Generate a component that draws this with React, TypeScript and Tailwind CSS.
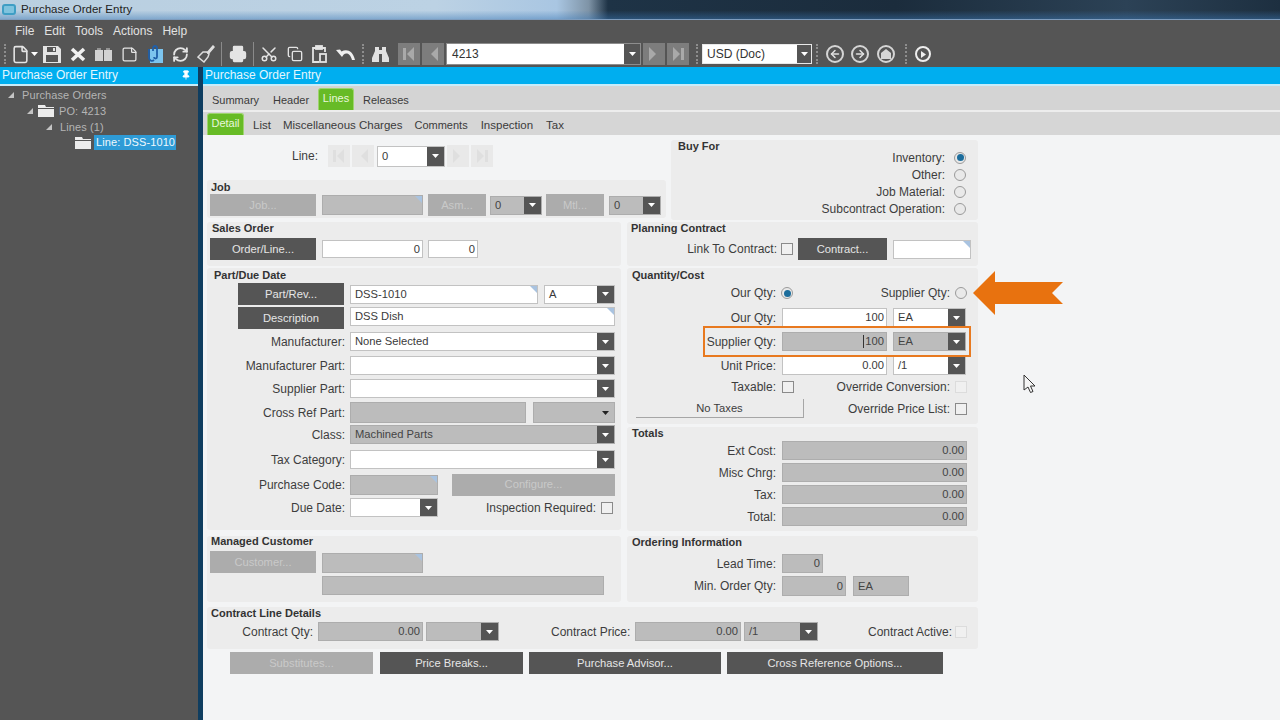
import type { ReactNode } from 'react';
import clsx from 'clsx';
import { Copy, File, Printer, RefreshCw, Scissors, StickyNote, ArrowLeft, ArrowRight, Pin } from 'lucide-react';

function Caret({ className = 'fill-white' }: { className?: string }) {
  return (
    <svg width="7" height="4" viewBox="0 0 7 4" className={className}>
      <path d="M0 0h7L3.5 4z" />
    </svg>
  );
}

function Box({ value, gray, right, notch, className }: { value?: ReactNode; gray?: boolean; right?: boolean; notch?: boolean; className?: string }) {
  return (
    <div
      className={clsx(
        'relative flex items-center shrink-0 px-[4px] text-[11.2px] border',
        gray ? 'bg-[#bcbcbc] border-[#adadad] text-[#444]' : 'bg-white border-[#c2c2c2] text-[#3a3a3a]',
        right && 'justify-end pr-[2px]',
        className,
      )}
    >
      {value}
      {notch && <span className="absolute top-0 right-0 w-0 h-0 border-t-[7px] border-l-[7px] border-t-[#a9c3e0] border-l-transparent" />}
    </div>
  );
}

function Combo({ value, gray, className, lightArrow }: { value?: string; gray?: boolean; className?: string; lightArrow?: boolean }) {
  return (
    <div
      className={clsx(
        'flex items-center shrink-0 text-[11.2px] border',
        gray ? 'bg-[#bcbcbc] border-[#adadad] text-[#444]' : 'bg-white border-[#c2c2c2] text-[#3a3a3a]',
        className,
      )}
    >
      <span className="flex-1 pl-[4px]">{value}</span>
      <span className={clsx('w-[17px] self-stretch flex items-center justify-center', lightArrow ? '' : 'bg-[#555]')}>
        <Caret className={lightArrow ? 'fill-[#222]' : 'fill-white'} />
      </span>
    </div>
  );
}

function Btn({ children, disabled, className }: { children: ReactNode; disabled?: boolean; className?: string }) {
  return (
    <div
      className={clsx(
        'flex items-center justify-center shrink-0 h-[22px] text-[11.2px]',
        disabled ? 'bg-[#acacac] text-[#c9c9c9]' : 'bg-[#555] text-[#e6e6e6]',
        className,
      )}
    >
      {children}
    </div>
  );
}

function Label({ children, className }: { children: ReactNode; className?: string }) {
  return <span className={clsx('shrink-0 text-right text-[12px] text-[#3d3d3d] whitespace-nowrap', className)}>{children}</span>;
}

function Radio({ on }: { on?: boolean }) {
  return (
    <span className="flex items-center justify-center shrink-0 w-[12px] h-[12px] rounded-full border border-[#9a9a9a] bg-[#e9e9e9]">
      {on && <span className="w-[7px] h-[7px] rounded-full bg-[#1c6d9c]" />}
    </span>
  );
}

function Check({ faint }: { faint?: boolean }) {
  return <span className={clsx('block shrink-0 w-[12px] h-[12px] border bg-[#f0f0f0]', faint ? 'border-[#dcdcdc]' : 'border-[#8a8a8a]')} />;
}

function Panel({ title, className, titleClass = 'leading-[13px]', children }: { title: string; className?: string; titleClass?: string; children: ReactNode }) {
  return (
    <section className={clsx('bg-[#ececec] rounded-[3px] shrink-0', className)}>
      <h3 className={clsx('h-[15px] pl-[4px] text-[11px] font-bold text-[#333]', titleClass)}>{title}</h3>
      {children}
    </section>
  );
}

function NavBtn({ dir, end, light }: { dir: 'l' | 'r'; end?: boolean; light?: boolean }) {
  return (
    <span className={clsx('flex items-center justify-center shrink-0 w-[22px] h-[22px]', light ? 'bg-[#e9e9e9]' : 'bg-[#7d7d7d]')}>
      <svg width="12" height="14" viewBox="0 0 12 14" className={light ? 'fill-[#dfdfdf]' : 'fill-[#a9a9a9]'}>
        {dir === 'l' ? (
          <>
            {end && <rect x="0" y="1" width="3" height="12" />}
            <path d="M11 0v14L4 7z" />
          </>
        ) : (
          <>
            <path d="M1 0v14l7-7z" />
            {end && <rect x="9" y="1" width="3" height="12" />}
          </>
        )}
      </svg>
    </span>
  );
}

function Grip({ className }: { className?: string }) {
  return <span className={clsx('block shrink-0 w-[2px] h-[20px] border-l-2 border-dotted border-[#8d8d8d]', className)} />;
}

function Folder({ className }: { className?: string }) {
  return (
    <svg width="16" height="12" viewBox="0 0 16 12" className={clsx('shrink-0 fill-[#ececec]', className)}>
      <path d="M0 0h7l1 2h8v1H0zM0 4h16v8H0z" />
    </svg>
  );
}

function Tri() {
  return (
    <svg width="6" height="6" viewBox="0 0 6 6" className="shrink-0 fill-[#c4c4c4]">
      <path d="M6 0v6H0z" />
    </svg>
  );
}

function Slot({ children, className }: { children: ReactNode; className?: string }) {
  return <span className={clsx('flex items-center justify-center shrink-0 h-[26px]', className)}>{children}</span>;
}

function Round({ children, className }: { children: ReactNode; className?: string }) {
  return <span className={clsx('flex items-center justify-center shrink-0 rounded-full border-2', className)}>{children}</span>;
}

const ICON = '#e4e4e4';

function Toolbar() {
  return (
    <div className="h-[26px] flex items-center bg-[#555] pl-[4px]">
      <Grip />
      <Slot className="w-[22px] ml-[3px]"><File size={19} color={ICON} strokeWidth={2} /></Slot>
      <Slot className="w-[7px]"><Caret /></Slot>
      <Slot className="w-[26px] ml-[1px]">
        <svg width="18" height="17" viewBox="0 0 18 17" fill={ICON}>
          <path fillRule="evenodd" d="M0 0h15l3 3v14H0zM4 1v5h9V1zM10 2h2v3h-2zM3 9v7h12V9z" />
        </svg>
      </Slot>
      <Slot className="w-[26px]">
        <svg width="16" height="15" viewBox="0 0 16 15" stroke="#f0f0f0" strokeWidth="3.6">
          <path d="M2 2l12 11M14 2L2 13" />
        </svg>
      </Slot>
      <Slot className="w-[25px]">
        <svg width="17" height="13" viewBox="0 0 17 13" fill="#d2d2d2">
          <path d="M0 2l8 0v11H0zM9 2h8v11H9z" />
          <path d="M2 1h4M11 1h4" stroke="#d2d2d2" />
        </svg>
      </Slot>
      <Slot className="w-[26px]"><StickyNote size={17} color={ICON} strokeWidth={1.8} /></Slot>
      <Slot className="w-[26px]">
        <svg width="16" height="18" viewBox="0 0 16 18">
          <rect x="3" y="4" width="13" height="14" fill="#7cc4ee" />
          <path d="M6 6V3a2 2 0 0 1 4 0v9a1.5 1.5 0 0 1-3 0" fill="none" stroke="#1f5fa8" strokeWidth="1.8" />
          <path d="M2 4v9a3 3 0 0 0 5 2" fill="none" stroke="#1f5fa8" strokeWidth="1.8" />
        </svg>
      </Slot>
      <Slot className="w-[25px]"><RefreshCw size={17} color={ICON} strokeWidth={2.6} /></Slot>
      <Slot className="w-[25px]">
        <svg width="18" height="18" viewBox="0 0 18 18" fill="none" stroke="#dedede" strokeWidth="1.5">
          <path d="M10 8l6-7 1 1-6 7" fill="#dedede" />
          <path d="M10 7l2 2-1 3-4 5-6-5 5-5z" />
        </svg>
      </Slot>
      <span className="block w-px h-[24px] bg-[#8a8a8a] ml-[3px]" />
      <Slot className="w-[31px]"><Printer size={18} color={ICON} fill={ICON} strokeWidth={1.8} /></Slot>
      <span className="block w-px h-[24px] bg-[#8a8a8a]" />
      <Slot className="w-[29px]"><Scissors size={18} color={ICON} strokeWidth={2} className="-rotate-90" /></Slot>
      <Slot className="w-[23px]"><Copy size={16} color={ICON} strokeWidth={2} /></Slot>
      <Slot className="w-[26px]">
        <svg width="15" height="18" viewBox="0 0 15 18" fill="none" stroke={ICON} strokeWidth="1.8">
          <path d="M4 3H1v14h6M10 3h3v4" />
          <rect x="4" y="1" width="6" height="3" fill={ICON} />
          <rect x="8" y="9" width="6" height="8" />
        </svg>
      </Slot>
      <Slot className="w-[26px]">
        <svg width="19" height="13" viewBox="0 0 19 13" fill="#f0f0f0">
          <path d="M0 2l6 7 1.5-2.2C10 4.6 14 5 16 12l3 0C17 2.5 10.500 0.500 5.500 3.500L4 1.500z" />
        </svg>
      </Slot>
      <Grip className="ml-[4px]" />
      <Slot className="w-[28px] ml-[2px]">
        <svg width="17" height="15" viewBox="0 0 17 15" fill="#e2e2e2">
          <path d="M3 0h4v3h3V0h4v4l3 7v4h-7V7H7v8H0v-4l3-7z" />
        </svg>
      </Slot>
      <span className="ml-[4px] mr-[2px]"><NavBtn dir="l" end /></span>
      <NavBtn dir="l" />
      <div className="ml-[2px] w-[195px] h-[22px] flex items-center border border-[#8d8d8d] bg-white text-[12px] text-[#333] shrink-0">
        <span className="flex-1 pl-[5px]">4213</span>
        <span className="w-[16px] self-stretch bg-[#555] flex items-center justify-center"><Caret /></span>
      </div>
      <span className="ml-[2px] mr-[2px]"><NavBtn dir="r" /></span>
      <NavBtn dir="r" end />
      <Grip className="ml-[7px]" />
      <div className="ml-[4px] w-[110px] h-[20px] flex items-center border border-[#e8e8e8] bg-white text-[12px] text-[#333] shrink-0">
        <span className="flex-1 pl-[4px]">USD (Doc)</span>
        <span className="w-[14px] self-stretch bg-[#555] flex items-center justify-center"><Caret /></span>
      </div>
      <Grip className="ml-[4px]" />
      <Round className="w-[18px] h-[18px] ml-[8px] border-[#d5d5d5]"><ArrowLeft size={12} color="#e0e0e0" strokeWidth={3} /></Round>
      <Round className="w-[18px] h-[18px] ml-[7px] border-[#d5d5d5]"><ArrowRight size={12} color="#e0e0e0" strokeWidth={3} /></Round>
      <Round className="w-[18px] h-[18px] ml-[8px] border-[#d5d5d5]">
        <svg width="10" height="10" viewBox="0 0 10 10" fill="#d5d5d5"><path d="M5 0l5 4v6H0V4z" /></svg>
      </Round>
      <Grip className="ml-[10px]" />
      <Round className="w-[16px] h-[16px] ml-[8px] border-[#eee]">
        <svg width="5" height="7" viewBox="0 0 5 7" fill="#eee"><path d="M0 0l5 3.500L0 7z" /></svg>
      </Round>
    </div>
  );
}

function Sidebar() {
  return (
    <aside className="w-[198px] shrink-0 flex flex-col bg-[#555]">
      <div className="h-[17px] flex items-center justify-between pb-px pl-[2px] pr-[7px] bg-[#00aeef] text-[12px] text-[#e4f6fd]">
        Purchase Order Entry
        <Pin size={10} color="#fff" fill="#fff" />
      </div>
      <div className="h-[2px] bg-[#c7ecf9]" />
      <div className="pt-[1px] text-[11px] tracking-[0.1px] text-[#b4b4b4] whitespace-nowrap">
        <div className="h-[16px] flex items-center pl-[8px] gap-[8px]"><Tri />Purchase Orders</div>
        <div className="h-[16px] flex items-center pl-[27px]"><Tri /><Folder className="ml-[5px] mr-[5px]" />PO: 4213</div>
        <div className="h-[16px] flex items-center pl-[46px] gap-[8px]"><Tri />Lines (1)</div>
        <div className="h-[15px] flex items-center pl-[75px]">
          <Folder className="mr-[3px]" />
          <span className="h-[15px] w-[82px] leading-[15px] pl-[2px] bg-[#2e9bd6] text-[#eef8fd]">Line: DSS-1010</span>
        </div>
      </div>
    </aside>
  );
}

function Tabs() {
  return (
    <>
      <div className="h-[17px] flex items-center pb-px pl-[2px] bg-[#00aeef] text-[12px] text-[#e4f6fd]">Purchase Order Entry</div>
      <div className="h-[2px] bg-[#c7ecf9]" />
      <div className="h-[24px] flex items-end pl-[9px] bg-[#d4d4d4] text-[11px] text-[#3b3b3b]">
        <span className="h-[22px] leading-[24px] w-[61px]">Summary</span>
        <span className="h-[22px] leading-[24px] w-[45px]">Header</span>
        <span className="h-[22px] w-[36px] leading-[18px] text-center bg-[#67bb26] text-[#e9f7dc] border border-b-0 border-[#9ed46e] rounded-t-[3px]">Lines</span>
        <span className="h-[22px] leading-[24px] ml-[9px]">Releases</span>
      </div>
      <div className="h-[2px] bg-[#ededed]" />
      <div className="h-[23px] flex items-end gap-[12px] pl-[4px] bg-[#d6d6d6] text-[11.5px] text-[#3b3b3b]">
        <span className="h-[22px] w-[37px] -mr-[3px] leading-[18px] text-center text-[11px] bg-[#67bb26] text-[#e9f7dc] border border-b-0 border-[#9ed46e] rounded-t-[3px]">Detail</span>
        <span className="h-[22px] leading-[24px]">List</span>
        <span className="h-[22px] leading-[24px]">Miscellaneous Charges</span>
        <span className="h-[22px] leading-[24px] text-[11px]">Comments</span>
        <span className="h-[22px] leading-[24px] ml-px">Inspection</span>
        <span className="h-[22px] leading-[24px] ml-px">Tax</span>
      </div>
    </>
  );
}

function BuyRow({ label, on }: { label: string; on?: boolean }) {
  return (
    <div className="h-[17px] flex items-center justify-end gap-[9px] pr-[12px]">
      <Label>{label}</Label>
      <Radio on={on} />
    </div>
  );
}

function PartPanel() {
  const row = 'flex items-center gap-[5px] h-[19px]';
  const lbl = 'w-[138px]';
  return (
    <Panel title="Part/Due Date" titleClass="leading-[15px]" className="h-[262px] pl-[3px]">
      <div className="flex items-center h-[22px] pl-[28px]">
        <Btn className="w-[106px]">Part/Rev...</Btn>
        <Box value="DSS-1010" notch className="ml-[6px] w-[188px] h-[19px]" />
        <Combo value="A" className="ml-[6px] w-[71px] h-[19px]" />
      </div>
      <div className="flex items-center h-[22px] pl-[28px] mt-[2px]">
        <Btn className="w-[106px]">Description</Btn>
        <Box value="DSS Dish" notch className="ml-[6px] w-[265px] h-[19px] -mt-[3px]" />
      </div>
      <div className={clsx(row, 'mt-[3px] -ml-[3px]')}><Label className={lbl}>Manufacturer:</Label><Combo value="None Selected" className="w-[265px] h-[19px]" /></div>
      <div className={clsx(row, 'mt-[5px] -ml-[3px]')}><Label className={lbl}>Manufacturer Part:</Label><Combo className="w-[265px] h-[19px]" /></div>
      <div className={clsx(row, 'mt-[4px] -ml-[3px]')}><Label className={lbl}>Supplier Part:</Label><Combo className="w-[265px] h-[19px]" /></div>
      <div className={clsx(row, 'mt-[4px] -ml-[3px] h-[21px]')}>
        <Label className={lbl}>Cross Ref Part:</Label>
        <Box gray className="w-[176px] h-[21px]" />
        <Combo gray lightArrow className="ml-[2px] w-[82px] h-[21px]" />
      </div>
      <div className={clsx(row, 'mt-[2px] -ml-[3px]')}><Label className={lbl}>Class:</Label><Combo gray value="Machined Parts" className="w-[265px] h-[19px]" /></div>
      <div className={clsx(row, 'mt-[6px] -ml-[3px]')}><Label className={lbl}>Tax Category:</Label><Combo className="w-[265px] h-[19px]" /></div>
      <div className={clsx(row, 'mt-[5px] -ml-[3px] h-[21px]')}>
        <Label className={lbl}>Purchase Code:</Label>
        <Box gray notch className="w-[88px] h-[20px]" />
        <Btn disabled className="ml-[9px] w-[163px] h-[21px]">Configure...</Btn>
      </div>
      <div className={clsx(row, 'mt-[3px] -ml-[3px]')}>
        <Label className={lbl}>Due Date:</Label>
        <Combo className="w-[88px] h-[19px]" />
        <Label className="ml-[42px] w-[111px]">Inspection Required:</Label>
        <Check />
      </div>
    </Panel>
  );
}

function QtyPanel() {
  const lbl = 'w-[149px]';
  return (
    <Panel title="Quantity/Cost" titleClass="leading-[15px]" className="h-[156px] pl-[1px]">
      <div className="flex items-center h-[20px] -ml-[1px]">
        <Label className={lbl}>Our Qty:</Label>
        <span className="ml-[5px]"><Radio on /></span>
        <Label className="w-[157px]">Supplier Qty:</Label>
        <span className="ml-[5px]"><Radio /></span>
      </div>
      <div className="flex items-center gap-[6px] h-[19px] mt-[5px] -ml-[1px]">
        <Label className={lbl}>Our Qty:</Label>
        <Box value="100" right className="w-[105px] h-[19px]" />
        <Combo value="EA" className="w-[73px] h-[19px]" />
      </div>
      <div className="flex items-center gap-[6px] h-[19px] mt-[5px] -ml-[1px]">
        <Label className={lbl}>Supplier Qty:</Label>
        <Box gray right value={<span className="border-l border-[#333] pl-px leading-[13px]">100</span>} className="w-[105px] h-[19px]" />
        <Combo gray value="EA" className="w-[73px] h-[19px]" />
      </div>
      <div className="flex items-center gap-[6px] h-[19px] mt-[5px] -ml-[1px]">
        <Label className={lbl}>Unit Price:</Label>
        <Box value="0.00" right className="w-[105px] h-[19px]" />
        <Combo value="/1" className="w-[73px] h-[19px]" />
      </div>
      <div className="flex items-center h-[14px] mt-[5px] -ml-[1px]">
        <Label className={lbl}>Taxable:</Label>
        <span className="ml-[6px]"><Check /></span>
        <Label className="w-[156px]">Override Conversion:</Label>
        <span className="ml-[5px]"><Check faint /></span>
      </div>
      <div className="flex items-center h-[19px] mt-[5px]">
        <div className="ml-[8px] w-[168px] h-[19px] flex items-center justify-center text-[11.2px] text-[#3d3d3d] border-r border-b border-[#a6a6a6]">No Taxes</div>
        <Label className="w-[146px]">Override Price List:</Label>
        <span className="ml-[5px]"><Check /></span>
      </div>
    </Panel>
  );
}

function TotalRow({ label, value }: { label: string; value: string }) {
  return (
    <div className="flex items-center gap-[6px] h-[19px] mb-[3px]">
      <Label className="w-[149px]">{label}</Label>
      <Box gray right value={value} className="w-[185px] h-[19px]" />
    </div>
  );
}

export default function App() {
  return (
    <div className="relative w-[1280px] h-[720px] overflow-hidden flex flex-col bg-[#f3f4f5] font-['Liberation_Sans',Arial,sans-serif]">
      <div className="h-[19px] flex items-center gap-[5px] pl-[2px] text-[11.5px] text-[#222] bg-[linear-gradient(180deg,rgba(30,60,90,0)_55%,rgba(60,120,180,0.45)_100%),linear-gradient(90deg,#b9cfe0_0%,#bcd2e4_34%,#a9c6e2_43.5%,#7e93a6_46%,#1e3346_47.5%,#1b2c3c_70%,#2c4256_88%,#1d2f40_100%)]">
        <span className="block w-[14px] h-[11px] rounded-[3px] border-2 border-[#3f9ec4] bg-[#7fc3de]" />
        Purchase Order Entry
      </div>
      <div className="h-px bg-[#7e9cbd]" />
      <div className="h-[21px] flex items-center gap-[10px] pl-[15px] bg-[#555] text-[12px] text-[#e2e2e2]">
        <span>File</span>
        <span>Edit</span>
        <span>Tools</span>
        <span>Actions</span>
        <span>Help</span>
      </div>
      <Toolbar />
      <div className="flex-1 flex min-h-0">
        <Sidebar />
        <div className="w-[5px] shrink-0 bg-[#0f3d5f]" />
        <main className="flex-1 flex flex-col min-w-0">
          <Tabs />
          <div className="pl-[4px] w-[779px] flex flex-col">
            <div className="flex gap-[5px] h-[87px]">
              <div className="w-[459px] flex flex-col">
                <div className="h-[45px] pb-[3px] flex items-center">
                  <Label className="w-[111px]">Line:</Label>
                  <span className="ml-[10px] mr-[2px]"><NavBtn dir="l" end light /></span>
                  <NavBtn dir="l" light />
                  <Combo value="0" className="ml-[3px] w-[68px] h-[21px]" />
                  <span className="ml-[2px] mr-[2px]"><NavBtn dir="r" light /></span>
                  <NavBtn dir="r" end light />
                </div>
                <Panel title="Job" titleClass="leading-[15px]" className="h-[38px]">
                  <div className="flex items-center pl-[3px] -mt-[1px]">
                    <Btn disabled className="w-[106px]">Job...</Btn>
                    <Box gray notch className="ml-[6px] w-[101px] h-[20px]" />
                    <Btn disabled className="ml-[5px] w-[58px]">Asm...</Btn>
                    <Combo gray value="0" className="ml-[4px] w-[52px] h-[19px]" />
                    <Btn disabled className="ml-[4px] w-[58px]">Mtl...</Btn>
                    <Combo gray value="0" className="ml-[5px] w-[52px] h-[19px]" />
                  </div>
                </Panel>
              </div>
              <Panel title="Buy For" className="w-[307px] h-[80px] mt-[5px] pl-[3px]">
                <div className="-mt-[6px]">
                  <BuyRow label="Inventory:" on />
                  <BuyRow label="Other:" />
                  <BuyRow label="Job Material:" />
                  <BuyRow label="Subcontract Operation:" />
                </div>
              </Panel>
            </div>
            <div className="grid grid-cols-[414px_351px] gap-x-[6px] w-[771px]">
              <Panel title="Sales Order" className="h-[44px] pl-[1px]">
                <div className="flex items-center pl-[2px] gap-[6px] mt-px">
                  <Btn className="w-[106px]">Order/Line...</Btn>
                  <Box value="0" right className="w-[101px] h-[18px]" />
                  <Box value="0" right className="-ml-[1px] w-[50px] h-[18px]" />
                </div>
              </Panel>
              <Panel title="Planning Contract" className="h-[44px]">
                <div className="flex items-center mt-px">
                  <Label className="w-[150px]">Link To Contract:</Label>
                  <span className="ml-[4px]"><Check /></span>
                  <Btn className="ml-[5px] w-[89px]">Contract...</Btn>
                  <Box notch className="ml-[6px] w-[78px] h-[19px]" />
                </div>
              </Panel>
              <div className="mt-[2px]"><PartPanel /></div>
              <div className="mt-[2px] flex flex-col gap-[3px]">
                <QtyPanel />
                <Panel title="Totals" className="h-[104px] pl-[1px]">
                  <div className="-ml-[1px] -mt-[1px]">
                    <TotalRow label="Ext Cost:" value="0.00" />
                    <TotalRow label="Misc Chrg:" value="0.00" />
                    <TotalRow label="Tax:" value="0.00" />
                    <TotalRow label="Total:" value="0.00" />
                  </div>
                </Panel>
              </div>
              <div className="mt-[5px]">
                <Panel title="Managed Customer" titleClass="leading-[11px]" className="h-[66px]">
                  <div className="flex pl-[3px]">
                    <Btn disabled className="w-[106px] h-[21px]">Customer...</Btn>
                    <div className="ml-[6px] mt-[2px] flex flex-col gap-[3px]">
                      <Box gray notch className="w-[101px] h-[20px]" />
                      <Box gray className="w-[282px] h-[19px]" />
                    </div>
                  </div>
                </Panel>
              </div>
              <div className="mt-[5px]">
                <Panel title="Ordering Information" className="h-[66px] pl-[1px]">
                  <div className="-ml-[1px] mt-[3px] flex items-center gap-[6px] h-[19px]">
                    <Label className="w-[149px]">Lead Time:</Label>
                    <Box gray right value="0" className="w-[41px] h-[19px]" />
                  </div>
                  <div className="-ml-[1px] mt-[3px] flex items-center gap-[6px] h-[20px]">
                    <Label className="w-[149px]">Min. Order Qty:</Label>
                    <Box gray right value="0" className="w-[64px] h-[20px]" />
                    <Box gray value="EA" className="ml-[1px] w-[56px] h-[20px]" />
                  </div>
                </Panel>
              </div>
            </div>
            <Panel title="Contract Line Details" className="w-[771px] h-[42px] mt-[5px]">
              <div className="flex items-center h-[19px]">
                <Label className="w-[106px]">Contract Qty:</Label>
                <Box gray right value="0.00" className="ml-[5px] w-[105px] h-[19px]" />
                <Combo gray className="ml-[3px] w-[73px] h-[19px]" />
                <Label className="ml-[52px] w-[78px]">Contract Price:</Label>
                <Box gray right value="0.00" className="ml-[6px] w-[106px] h-[19px]" />
                <Combo gray value="/1" className="ml-[3px] w-[74px] h-[19px]" />
                <Label className="ml-[50px] w-[84px]">Contract Active:</Label>
                <span className="ml-[3px]"><Check faint /></span>
              </div>
            </Panel>
            <div className="flex mt-[3px] ml-[23px] gap-[6px]">
              <Btn disabled className="w-[143px]">Substitutes...</Btn>
              <Btn className="w-[143px] ml-px">Price Breaks...</Btn>
              <Btn className="w-[192px]">Purchase Advisor...</Btn>
              <Btn className="w-[216px]">Cross Reference Options...</Btn>
            </div>
          </div>
        </main>
      </div>
      {/* overlays: the tutorial callouts drawn on top of the form */}
      <div className="absolute left-[703px] top-[326px] w-[268px] h-[31px] border-2 border-[#e8791f]" />
      <svg className="absolute left-[972px] top-[270px]" width="92" height="46" viewBox="0 0 92 46" fill="#e8720f">
        <path d="M1 23L23 1v11h68L80 23l11 11H23v11z" />
      </svg>
      <svg className="absolute left-[1023px] top-[374px]" width="13" height="20" viewBox="0 0 13 20" fill="#f5f5f5" stroke="#333">
        <path d="M1 1v15l4-3 2.500 5.500 2.500-1L7.500 12H12z" />
      </svg>
    </div>
  );
}
